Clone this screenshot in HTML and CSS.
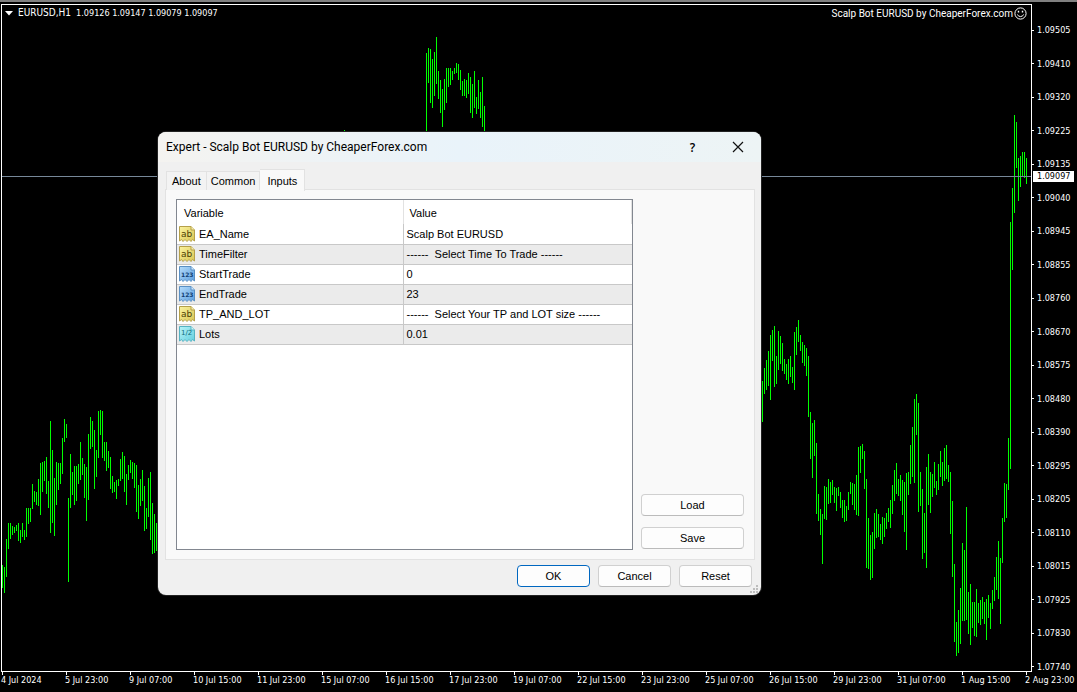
FILE: index.html
```html
<!DOCTYPE html>
<html lang="en">
<head>
<meta charset="utf-8">
<title>EURUSD,H1</title>
<link rel="stylesheet" href="styles.css">
</head>
<body>
<main class="terminal">
  <section class="plot">
    <svg class="bars" viewBox="2 5 1029 666" preserveAspectRatio="none" aria-hidden="true">
      <path id="bars" class="bar-path"/>
      <path class="price-line" d="M2 176.5H1031"/>
    </svg>
    <header class="plot-head">
      <div class="symbol"><svg width="8" height="5" viewBox="0 0 8 5" aria-hidden="true"><path d="M0 0H8L4 4.5Z" fill="#fff"/></svg><span class="pair">EURUSD,H1</span><span>1.09126 1.09147 1.09079 1.09097</span></div>
      <div class="expert">Scalp Bot EURUSD by CheaperForex.com<svg width="13" height="13" viewBox="0 0 13 13" fill="none" stroke="#fff" aria-hidden="true"><circle cx="6.5" cy="6.5" r="5.6"/><path d="M3.2 7.6Q6.5 11.6 9.8 7.6"/><path d="M4.5 3.8V5.6M8.5 3.8V5.6" stroke-width="1.4"/></svg></div>
    </header>
  </section>
  <aside class="prices">
    <span>1.09505</span><span>1.09410</span><span>1.09320</span><span>1.09225</span><span>1.09135</span><span>1.09040</span><span>1.08945</span><span>1.08855</span><span>1.08760</span><span>1.08670</span><span>1.08575</span><span>1.08480</span><span>1.08390</span><span>1.08295</span><span>1.08205</span><span>1.08110</span><span>1.08015</span><span>1.07925</span><span>1.07830</span><span>1.07740</span>
    <b class="current">1.09097</b>
  </aside>
  <footer class="times">
    <span>4 Jul 2024</span><span>5 Jul 23:00</span><span>9 Jul 07:00</span><span>10 Jul 15:00</span><span>11 Jul 23:00</span><span>15 Jul 07:00</span><span>16 Jul 15:00</span><span>17 Jul 23:00</span><span>19 Jul 07:00</span><span>22 Jul 15:00</span><span>23 Jul 23:00</span><span>25 Jul 07:00</span><span>26 Jul 15:00</span><span>29 Jul 23:00</span><span>31 Jul 07:00</span><span>1 Aug 15:00</span><span>2 Aug 23:00</span>
  </footer>
</main>

<svg class="defs" aria-hidden="true">
  <defs>
    <linearGradient id="gy" x1="0" y1="0" x2="1" y2="1"><stop offset="0" stop-color="#fbf3a0"/><stop offset="1" stop-color="#d9c552"/></linearGradient>
    <linearGradient id="gb" x1="0" y1="0" x2="1" y2="1"><stop offset="0" stop-color="#b5dcfb"/><stop offset="1" stop-color="#5c9fdf"/></linearGradient>
    <linearGradient id="gc" x1="0" y1="0" x2="1" y2="1"><stop offset="0" stop-color="#b8f3f8"/><stop offset="1" stop-color="#62cfdf"/></linearGradient>
    <path id="page" d="M.5 .5H12L15.5 4V15L13.5 13.5L12 15.5L10 13.5L8 15.5L6 13.5L4 15.5L2.5 13.5L.5 15Z"/>
    <path id="fold" d="M12 .5V4H15.5"/>
    <g id="i-ab" stroke="#b5a04a"><use href="#page" fill="url(#gy)"/><use href="#fold" fill="#f8f0b0"/><text class="glyph glyph-ab" x="2" y="11">ab</text></g>
    <g id="i-123" stroke="#5a90c4"><use href="#page" fill="url(#gb)"/><use href="#fold" fill="#d4ebff"/><text class="glyph glyph-num" x="2" y="11">123</text></g>
    <g id="i-half" stroke="#55b3c2"><use href="#page" fill="url(#gc)"/><use href="#fold" fill="#d5f8fb"/><text class="glyph glyph-half" x="2" y="9">1/2</text></g>
  </defs>
</svg>

<section class="dialog" role="dialog" aria-labelledby="dialog-title">
  <header class="titlebar">
    <h1 id="dialog-title">Expert - Scalp Bot EURUSD by CheaperForex.com</h1>
    <button class="caption" aria-label="Help">?</button>
    <button class="caption" aria-label="Close"><svg width="12" height="12" viewBox="0 0 12 12" stroke="#111" fill="none"><path d="M1 1L11 11M11 1L1 11" stroke-width="1.2"/></svg></button>
  </header>
  <nav class="tabs" role="tablist">
    <button class="tab" role="tab">About</button>
    <button class="tab" role="tab">Common</button>
    <button class="tab tab-active" role="tab" aria-selected="true">Inputs</button>
  </nav>
  <div class="pane">
    <div class="list">
      <table>
        <thead><tr><th>Variable</th><th>Value</th></tr></thead>
        <tbody>
          <tr><td><div class="var"><svg class="icon" viewBox="0 0 16 16"><use href="#i-ab"/></svg>EA_Name</div></td><td>Scalp Bot EURUSD</td></tr>
          <tr><td><div class="var"><svg class="icon" viewBox="0 0 16 16"><use href="#i-ab"/></svg>TimeFilter</div></td><td>------&nbsp; Select Time To Trade ------</td></tr>
          <tr><td><div class="var"><svg class="icon" viewBox="0 0 16 16"><use href="#i-123"/></svg>StartTrade</div></td><td>0</td></tr>
          <tr><td><div class="var"><svg class="icon" viewBox="0 0 16 16"><use href="#i-123"/></svg>EndTrade</div></td><td>23</td></tr>
          <tr><td><div class="var"><svg class="icon" viewBox="0 0 16 16"><use href="#i-ab"/></svg>TP_AND_LOT</div></td><td>------&nbsp; Select Your TP and LOT size ------</td></tr>
          <tr><td><div class="var"><svg class="icon" viewBox="0 0 16 16"><use href="#i-half"/></svg>Lots</div></td><td>0.01</td></tr>
        </tbody>
      </table>
    </div>
    <div class="side">
      <button class="btn">Load</button>
      <button class="btn">Save</button>
    </div>
  </div>
  <footer class="actions">
    <button class="btn btn-default">OK</button>
    <button class="btn">Cancel</button>
    <button class="btn">Reset</button>
  </footer>
  <svg class="grip" width="8" height="8" viewBox="0 0 8 8" fill="#bdbdbd" aria-hidden="true"><path d="M6 0h2v2h-2zM3 3h2v2h-2zM6 3h2v2h-2zM0 6h2v2h-2zM3 6h2v2h-2zM6 6h2v2h-2z"/></svg>
</section>
<script src="chart.js"></script>
</body>
</html>
```
FILE: styles.css
```css
* { box-sizing: border-box; }

body {
  margin: 0;
  background: #000;
  color: #fff;
  font-family: "Liberation Sans", Arial, sans-serif;
  font-size: 11px;
  overflow: hidden;
}

button { font: inherit; color: #000; }

.terminal {
  display: grid;
  grid-template-columns: 1fr 45px;
  grid-template-rows: 1fr 20px;
  height: 100vh;
  padding: 2px 0 0 1px;
  border-top: 2px solid #808080;
  font-family: "DejaVu Sans Condensed", Tahoma, sans-serif;
  font-size: 9px;
  line-height: 12px;
  white-space: nowrap;
}

.plot {
  position: relative;
  border: 1px solid #fff;
  min-height: 0;
}

.bars {
  position: absolute;
  inset: 0;
  width: 100%;
  height: 100%;
}

.bar-path { stroke: #0f0; fill: none; shape-rendering: crispEdges; }
.price-line { stroke: #778899; shape-rendering: crispEdges; }

.plot-head {
  position: relative;
  display: flex;
  justify-content: space-between;
  padding: 2px 4px 0 3px;
}

.symbol, .expert { display: flex; }
.symbol { gap: 5px; align-items: baseline; line-height: 11px; }
.symbol svg { align-self: center; }
.pair { font-size: 10px; }
.expert {
  gap: 1px;
  align-items: center;
  font-family: Roboto, Tahoma, sans-serif;
  font-size: 10px;
}

.prices {
  position: relative;
  display: flex;
  flex-direction: column;
  justify-content: space-between;
  padding: 20px 0 0;
  margin-bottom: -1px;
}

.prices span { display: flex; align-items: center; gap: 3px; }
.prices span::before { content: ""; width: 2px; height: 1px; background: #fff; }

.current {
  position: absolute;
  top: 167px;
  left: 1px;
  padding: 0 4px;
  background: #fff;
  color: #000;
  font-weight: normal;
  line-height: 11px;
}

.times { grid-column: 1 / -1; display: flex; line-height: 11px; }
.times span { flex: 0 0 64px; }
.times span::before {
  content: "";
  display: block;
  width: 1px;
  height: 3px;
  margin-left: 1px;
  background: #fff;
}

.defs { position: absolute; width: 0; height: 0; }

.dialog {
  position: absolute;
  left: 158px;
  top: 132px;
  width: 603px;
  background: #f0f0f0;
  color: #000;
  border-radius: 8px;
  overflow: hidden;
  box-shadow: 0 0 0 1px #222;
}

.titlebar {
  display: flex;
  align-items: center;
  height: 30px;
  padding: 0 1px 0 8px;
  background: linear-gradient(90deg, #f4f3f0, #e9f3fa 50%, #edf4f5);
}

.titlebar h1 {
  flex: 1;
  margin: 0;
  font: normal 12px Roboto, "Segoe UI", sans-serif;
}

.caption {
  display: flex;
  align-items: center;
  justify-content: center;
  width: 45px;
  height: 28px;
  padding: 0;
  border: 0;
  background: none;
  font: 600 12px "Open Sans", "Segoe UI", sans-serif;
}

.tabs {
  display: flex;
  align-items: flex-end;
  height: 28px;
  padding: 0 8px;
}

.tab {
  height: 19px;
  padding: 0 5px;
  border: 1px solid #e2e2e2;
  border-bottom: 0;
  background: #f3f3f3;
  line-height: 18px;
}

.tab + .tab { border-left: 0; padding: 0 4px; }

.tabs .tab-active {
  height: 22px;
  margin-bottom: -1px;
  padding: 0 7px;
  background: #f9f9f9;
  position: relative;
}

.pane {
  display: flex;
  gap: 8px;
  margin: -1px 6px 0 7px;
  padding: 9px 10px;
  border: 1px solid #e2e2e2;
  background: #f9f9f9;
}

.list {
  flex: 1;
  min-height: 351px;
  border: 1px solid #828790;
  background: #fff;
}

table {
  width: 100%;
  table-layout: fixed;
  border-collapse: collapse;
}

th, td {
  height: 20px;
  padding: 0 3px;
  text-align: left;
  font-weight: normal;
}

th { height: 24px; padding: 2px 6px 0; }
th:first-child { width: 226px; padding-left: 7px; }
th, td { border-right: 1px solid #e2e2e2; }
td { border-right-color: #c8c8c8; border-bottom: 1px solid #c8c8c8; }
td:last-child { border-right: 0; }
td:first-child { padding: 0 2px; }
tbody tr:nth-child(even) { background: #ebebeb; }

.var { display: flex; align-items: center; gap: 4px; }
.icon { width: 16px; height: 16px; }
.glyph { stroke: none; font-family: "DejaVu Sans", sans-serif; }
.glyph-ab { fill: #4c3f04; font-size: 9px; }
.glyph-num { fill: #123f75; font-size: 6px; font-weight: bold; }
.glyph-half { fill: #0e6d7c; font-size: 7px; }

.side {
  display: flex;
  flex-direction: column;
  justify-content: flex-end;
  gap: 11px;
  width: 103px;
  padding-bottom: 1px;
}

.btn {
  height: 22px;
  padding: 0;
  border: 1px solid #d0d0d0;
  border-bottom-color: #bbb;
  border-radius: 4px;
  background: #fdfdfd;
}

.btn-default { border-color: #0067c0; }

.actions {
  display: flex;
  justify-content: flex-end;
  gap: 8px;
  padding: 5px 9px 8px;
}

.actions .btn { width: 73px; }

.grip { position: absolute; right: 3px; bottom: 2px; }
```
FILE: chart.js
```js
// Each run: first x, then high/low pairs, one bar every two units.
const runs = [
  [2, "565,588 567,593 539,577 523,549 523,539 526,535 527,533 525,531 523,541 530,543 523,537 530,540 508,537 508,524 508,522 484,509 491,502 492,505 479,506 463,515 462,492 461,481 457,494 481,508 421,533 450,523 478,536 462,505 463,490 463,484 438,474 419,442 424,438 498,582 454,508 472,495 466,505 466,501 464,484 442,480 458,475 464,498 467,521 434,500 417,449 421,447 430,489 450,477 411,458 410,435 411,458 442,461 442,471 451,468 457,489 476,493 482,492 480,499 479,486 459,481 452,479 456,492 474,505 465,480 460,473 462,479 463,488 465,512 485,519 479,506 470,501 486,531 508,529 478,517 472,540 503,554 514,553 523,551"],
  [344, "130,140"],
  [426, "53,140 48,83 49,103 59,108 52,96 37,84 71,99 80,113 89,127 79,110 68,103 68,87 68,85 71,80 68,74 63,73 64,80 70,90 81,96 79,96 80,98 73,94 77,113 84,118 71,108 97,114 80,109 92,118 77,127 106,140"],
  [762, "381,422 368,394 360,390 351,386 335,400 330,361 326,387 356,384 331,370 336,364 343,371 359,374 364,380 359,384 356,377 367,383 332,390 327,355 320,342 335,351 342,363 345,366 348,376 356,417 412,459 423,478 420,456 443,514 494,521 509,535 514,564 486,519 487,520 479,504 482,503 480,495 487,503 488,511 487,496 492,508 500,518 500,522 506,521 492,510 482,494 483,505 484,510 475,515 447,516 446,473 444,459 451,489 479,568 518,569 535,580 532,578 513,549 509,538 514,537 524,540 517,544 518,537 513,529 508,522 500,528 485,514 470,501 463,494 479,496 475,501 480,515 482,532 473,550 472,495 445,484 427,477 399,483 394,435 403,512 472,506 489,559 513,553 467,568 454,505 472,513 474,497 462,488 481,495 464,490 451,477 462,486 448,481 445,479 465,482 472,534 501,577 564,642 622,656 610,653 588,644 543,621 550,621 507,620 592,634 584,645 602,628 602,636 589,637 603,623 600,625 597,619 602,624 599,640 595,618 603,629 590,609 577,601 557,590 541,599 558,624 518,563 483,522 484,518 438,490 222,469 188,270 115,213 122,168 158,201 156,187 152,177 152,178 158,184"]
];

const d = runs.map(([x0, text]) =>
  text.split(" ").map((pair, i) => {
    const [high, low] = pair.split(",");
    return `M${x0 + i * 2 + 0.5} ${high}V${low}`;
  }).join("")
).join("");

document.getElementById("bars").setAttribute("d", d);
```
